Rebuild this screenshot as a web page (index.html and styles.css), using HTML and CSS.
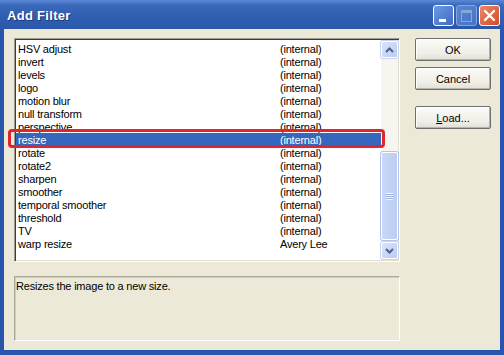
FILE: index.html
```html
<!DOCTYPE html>
<html lang="en">
  <head>
    <link rel="stylesheet" href="styles.css">
    <title>Add Filter</title>
  </head>
  <body>
    <div class="window">
      <div class="titlebar">
        <span class="title">Add Filter</span>
        <div class="caption-buttons">
          <span class="cap cap-min"><span class="min-bar"></span></span>
          <span class="cap cap-max"><span class="max-box"></span></span>
          <span class="cap cap-close">
            <svg width="13" height="13" viewBox="0 0 13 13">
              <path d="M2 2 L11 11 M11 2 L2 11" stroke="#fff" stroke-width="2.4" stroke-linecap="round"/>
            </svg>
          </span>
        </div>
      </div>
      <div class="client">
        <div class="left">
          <div class="listbox">
            <div class="rows">
              <div class="row"><span class="name">HSV adjust</span><span class="author">(internal)</span></div>
              <div class="row"><span class="name">invert</span><span class="author">(internal)</span></div>
              <div class="row"><span class="name">levels</span><span class="author">(internal)</span></div>
              <div class="row"><span class="name">logo</span><span class="author">(internal)</span></div>
              <div class="row"><span class="name">motion blur</span><span class="author">(internal)</span></div>
              <div class="row"><span class="name">null transform</span><span class="author">(internal)</span></div>
              <div class="row"><span class="name">perspective</span><span class="author">(internal)</span></div>
              <div class="row selected"><span class="name">resize</span><span class="author">(internal)</span></div>
              <div class="row"><span class="name">rotate</span><span class="author">(internal)</span></div>
              <div class="row"><span class="name">rotate2</span><span class="author">(internal)</span></div>
              <div class="row"><span class="name">sharpen</span><span class="author">(internal)</span></div>
              <div class="row"><span class="name">smoother</span><span class="author">(internal)</span></div>
              <div class="row"><span class="name">temporal smoother</span><span class="author">(internal)</span></div>
              <div class="row"><span class="name">threshold</span><span class="author">(internal)</span></div>
              <div class="row"><span class="name">TV</span><span class="author">(internal)</span></div>
              <div class="row"><span class="name">warp resize</span><span class="author">Avery Lee</span></div>
            </div>
            <div class="scrollbar">
              <div class="sb-btn">
                <svg width="9" height="6" viewBox="0 0 9 6"><path d="M1 5 L4.5 1.5 L8 5" fill="none" stroke="#4d6185" stroke-width="2"/></svg>
              </div>
              <div class="sb-track">
                <div class="sb-thumb">
                  <span class="grip"></span>
                </div>
              </div>
              <div class="sb-btn">
                <svg width="9" height="6" viewBox="0 0 9 6"><path d="M1 1 L4.5 4.5 L8 1" fill="none" stroke="#4d6185" stroke-width="2"/></svg>
              </div>
            </div>
            <!-- red annotation round the selected row -->
            <div class="marker"></div>
          </div>
          <div class="description">Resizes the image to a new size.</div>
        </div>
        <div class="right">
          <button class="btn">OK</button>
          <button class="btn">Cancel</button>
          <button class="btn btn-load"><u>L</u>oad...</button>
        </div>
      </div>
    </div>
  </body>
</html>
```

FILE: styles.css
```css
body{
  margin: 0;
  background-color: #2a58ad;
  font-family: 'Liberation Sans', Arial, sans-serif;
  font-size: 11px;
  color: #000000;
}
.window{
  width: 504px;
  height: 355px;
  display: flex;
  flex-direction: column;
  background-color: #2956ac;
}
.titlebar{
  height: 29px;
  display: flex;
  align-items: center;
  justify-content: space-between;
  padding: 0 4px 0 7px;
  background: linear-gradient(#5b88d6 0%, #3a68bb 18%, #2f5db0 60%, #2a57a9 100%);
}
.title{
  color: #ffffff;
  font-weight: bold;
  font-size: 13px;
  letter-spacing: 0.3px;
  text-shadow: 1px 1px 0 #1c3a78;
  padding-top: 1px;
}
.caption-buttons{
  display: flex;
  gap: 2px;
  padding-top: 2px;
}
.cap{
  width: 19px;
  height: 19px;
  border: 1px solid #ffffff;
  border-radius: 3px;
  display: flex;
  align-items: center;
  justify-content: center;
  position: relative;
  background: linear-gradient(135deg, #6d98e3, #3e6cc4);
}
.cap-max{
  border-color: #8aa6d8;
  background: linear-gradient(135deg, #5a86d3, #4572c5);
}
.cap-close{
  background: linear-gradient(135deg, #ea8a6a, #d44a24);
}
.min-bar{
  width: 7px;
  height: 3px;
  background-color: #ffffff;
  margin-top: 9px;
  margin-right: 3px;
}
.max-box{
  width: 9px;
  height: 8px;
  border: 1px solid #8aa6d8;
  border-top-width: 3px;
}
.client{
  flex: 1;
  margin: 0 4px 5px 4px;
  background-color: #ece9d8;
  display: flex;
  padding: 9px 0 0 10px;
  gap: 15px;
}
.left{
  width: 386px;
  display: flex;
  flex-direction: column;
  gap: 14px;
}
.listbox{
  position: relative;
  height: 220px;
  display: flex;
  background-color: #ffffff;
  border-top: 1px solid #9d9b92;
  border-left: 1px solid #9d9b92;
  border-bottom: 1px solid #ffffff;
  border-right: 1px solid #ffffff;
  box-shadow: inset 1px 1px 0 #3c3c3c, inset -1px -1px 0 #e2dfd2;
  padding: 1px;
}
.rows{
  flex: 1;
  padding-top: 2px;
  letter-spacing: -0.2px;
}
.row{
  height: 13px;
  line-height: 14px;
  display: flex;
  padding-left: 2px;
}
.row .name{
  width: 262px;
}
.row.selected{
  background-color: #3567be;
  color: #ffffff;
}
.scrollbar{
  width: 17px;
  display: flex;
  flex-direction: column;
  background-color: #f6f5f0;
}
.sb-btn{
  height: 15px;
  margin: 1px 0;
  border: 1px solid #ffffff;
  border-radius: 2px;
  background: linear-gradient(135deg, #dbe5fb, #b9cbf3);
  display: flex;
  align-items: center;
  justify-content: center;
  box-shadow: 0 0 0 1px #c8d4ee;
}
.sb-track{
  flex: 1;
  display: flex;
  flex-direction: column;
  justify-content: flex-end;
  padding: 1px 0;
}
.sb-thumb{
  height: 86px;
  border: 1px solid #ffffff;
  border-radius: 2px;
  background: linear-gradient(90deg, #c9d8f8, #bccdf4);
  box-shadow: 0 0 0 1px #b3c5ee;
  display: flex;
  align-items: center;
  justify-content: center;
}
.grip{
  width: 7px;
  height: 7px;
  background: repeating-linear-gradient(#eef3fd 0 1px, #9cb3e3 1px 2px);
}
.marker{
  position: absolute;
  left: -7px;
  top: 90px;
  width: 371px;
  height: 13px;
  border: 3px solid #e0262c;
  border-radius: 4px;
}
.description{
  height: 60px;
  border-top: 1px solid #aca899;
  border-left: 1px solid #aca899;
  border-bottom: 1px solid #ffffff;
  border-right: 1px solid #ffffff;
  box-shadow: 1px 1px 0 #d2cfc0 inset;
  padding: 3px 2px 0 1px;
  letter-spacing: -0.2px;
}
.right{
  display: flex;
  flex-direction: column;
  width: 76px;
}
.btn{
  height: 23px;
  margin-bottom: 6px;
  font-family: 'Liberation Sans', Arial, sans-serif;
  font-size: 11px;
  color: #000000;
  background: linear-gradient(#fbfbf8, #efeee7 70%, #e2e0d6);
  border: 1px solid #6f6f6f;
  border-radius: 2px;
  box-shadow: inset -1px -1px 0 #b6b4aa, inset 1px 1px 0 #ffffff;
  padding: 0;
}
.btn-load{
  margin-top: 10px;
}
```
